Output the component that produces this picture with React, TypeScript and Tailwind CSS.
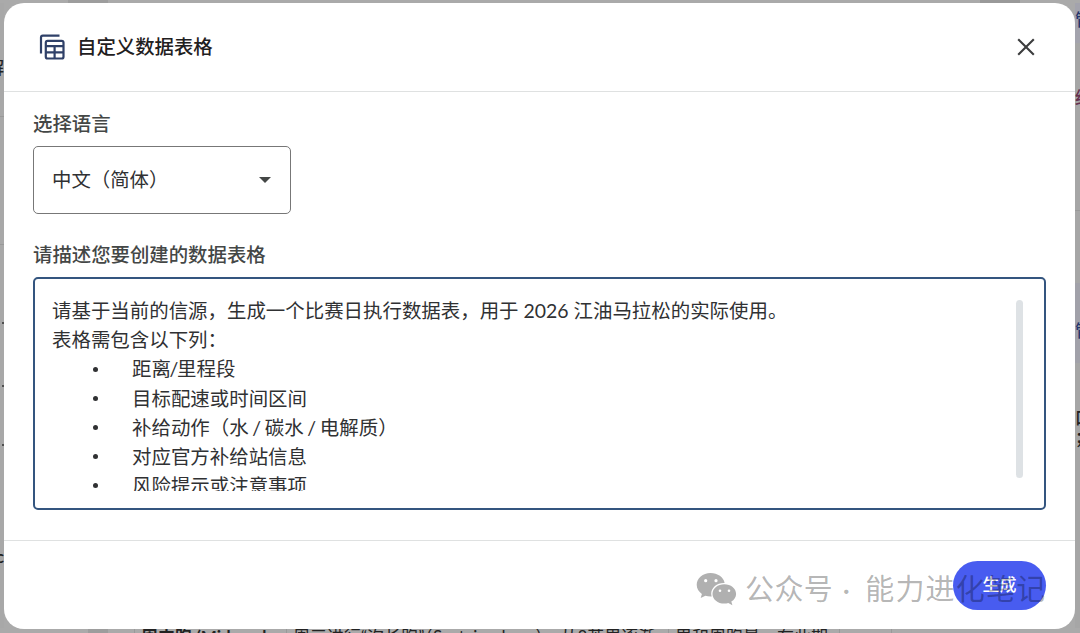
import type { ReactNode } from 'react'

const INTRO = ['请基于当前的信源，生成一个比赛日执行数据表，用于 2026 江油马拉松的实际使用。', '表格需包含以下列：']

const COLUMNS = [
  '距离/里程段',
  '目标配速或时间区间',
  '补给动作（水 / 碳水 / 电解质）',
  '对应官方补给站信息',
  '风险提示或注意事项',
]

function TableIcon() {
  return (
    <svg width="26" height="26" viewBox="0 0 26 26" fill="none" stroke="#2f4068" strokeWidth="2.2">
      <path d="M2 19.5V3.5a1.8 1.8 0 0 1 1.8-1.8H20.5" />
      <rect x="6.8" y="6.8" width="17.7" height="17.7" rx="1.8" />
      <path d="M6.8 12.2h17.7M6.8 18.3h17.7M15.6 12.2v12.3" />
    </svg>
  )
}

function CloseIcon() {
  return (
    <svg width="18" height="18" viewBox="0 0 18 18" fill="none" stroke="#3c3d3e" strokeWidth="2.1">
      <path d="M1.2 1.2l15.6 15.6M16.8 1.2L1.2 16.8" />
    </svg>
  )
}

function WechatIcon() {
  return (
    <svg width="42" height="34" viewBox="0 0 42 34" fill="#b0b0b0">
      <path d="M14.5 1C6.8 1 .7 6.2.7 12.8c0 3.7 2 7 5.2 9.2l-1.2 4 4.7-2.3c1.6.5 3.3.8 5.1.8h1.200c-.3-1-.5-1.9-.5-2.9 0-6 5.7-10.7 12.6-10.7h.8C27.7 5.2 21.7 1 14.5 1z" />
      <path d="M28.3 12.3c-6.5 0-11.8 4.2-11.8 9.6s5.3 9.7 11.8 9.7c1.4 0 2.8-.2 4-.6l4.1 2.2-1.1-3.6c2.9-1.8 4.8-4.5 4.8-7.7 0-5.4-5.300-9.600-11.800-9.600z" />
      <g fill="#fff">
        <circle cx="9.7" cy="8.7" r="1.6" />
        <circle cx="20" cy="8.7" r="1.6" />
        <circle cx="24" cy="18.7" r="1.3" />
        <circle cx="33" cy="18.7" r="1.3" />
      </g>
    </svg>
  )
}

function Cell({ className, children }: { className: string; children?: ReactNode }) {
  return <div className={`shrink-0 overflow-hidden border-l border-[#999] ${className}`}>{children}</div>
}

// The dimmed page that shows around the dialog
function Backdrop() {
  return (
    <div className="flex h-full flex-col bg-[#aaa] text-[17px] text-[#222]">
      <div className="flex h-[3px]">
        <div className="ml-[68px] w-10 bg-[#9d9d9d]" />
        <div className="ml-auto mr-[60px] w-10 bg-[#999]" />
      </div>
      <div className="flex h-[625px] justify-between leading-5">
        <div className="flex w-1 flex-col items-end overflow-hidden bg-[#a8a8a8]">
          <div className="mt-[55px] h-5 font-medium">解</div>
          <div className="mt-[38px] h-px w-1 bg-[#999]" />
          <div className="mt-[127px] h-px w-1 bg-[#999]" />
          <div className="mt-[77px] size-0.5 rounded-full bg-[#333]" />
          <div className="mt-[61px] size-0.5 rounded-full bg-[#333]" />
          <div className="mt-[57px] size-0.5 rounded-full bg-[#333]" />
          <div className="mt-[101px] h-5 font-bold">c</div>
        </div>
        <div className="flex w-[5px] flex-col overflow-hidden bg-[#a6a6a6] font-medium">
          <div className="h-10 bg-[#a3a3ad] pt-[7px] text-[#26366d]">管</div>
          <div className="mt-[45px] h-5 text-[#65304e]">经</div>
          <div className="mt-[102px] h-px bg-[#999]" />
          <div className="mt-[72px] h-20 bg-[#a1a1a9] pt-[38px] text-[#26366d]">管</div>
          <div className="mt-[45px] h-5">口</div>
          <div className="h-5">；</div>
        </div>
      </div>
      <div className="flex h-[5px] whitespace-nowrap leading-[17px]">
        <div className="w-[88px] shrink-0" />
        <div className="w-5 shrink-0 bg-[#9d9d9d]" />
        <div className="w-[26px] shrink-0" />
        <Cell className="w-[152px] pl-1.5 font-bold">周中跑 (Midweek</Cell>
        <Cell className="w-[382px] pl-1.5">周三进行“次长跑”（Sustained run），从8英里逐渐</Cell>
        <Cell className="w-[171px] pl-1.5">里和周跑量。在此期</Cell>
        <Cell className="w-[52px]" />
        <Cell className="w-[98px]" />
      </div>
    </div>
  )
}

function LanguageSelect() {
  return (
    <button className="flex h-[68px] w-[258px] items-center justify-between rounded-[5px] border border-[#777] pb-0.5 pl-[18px] pr-[19px] text-[#303133]">
      <span>中文（简体）</span>
      <svg className="mt-0.5" width="12" height="6" viewBox="0 0 12 6" fill="#444746">
        <path d="M0 0h12L6 6z" />
      </svg>
    </button>
  )
}

function PromptBox() {
  return (
    <div className="mt-2 flex h-[233px] w-[1013px] justify-between rounded-[5px] border-2 border-[#34557f] pl-[17px] pr-[21px] pt-[17px] text-[19.45px] text-[#303133]">
      <div className="h-[195px] overflow-hidden leading-[29.2px]">
        {INTRO.map((line) => (
          <p key={line}>{line}</p>
        ))}
        <ul>
          {COLUMNS.map((col) => (
            <li key={col} className="flex items-center pl-[41px]">
              <span className="mr-[34px] size-[5px] rounded-full bg-[#303133]" />
              <span>
                {col.split('/').map((part, i) => (
                  <span key={i}>
                    {i > 0 && <span className="-mx-[1.3px]">/</span>}
                    {part}
                  </span>
                ))}
              </span>
            </li>
          ))}
        </ul>
      </div>
      <div className="mt-1 h-[178px] w-[7px] rounded-full bg-[#dee2e5]" />
    </div>
  )
}

export default function App() {
  return (
    <div className="relative h-[633px] w-[1080px] overflow-hidden font-['Lato','Noto_Sans_CJK_SC',sans-serif]">
      <Backdrop />
      <div className="absolute left-1 top-[3px] flex h-[626px] w-[1071px] flex-col rounded-[20px] bg-white text-[19.4px]">
        <header className="flex h-[89px] shrink-0 items-center border-b border-[#dfe1e1] pl-[35px] pr-10">
          <TableIcon />
          <h1 className="ml-3 font-medium text-[#1f2021]">自定义数据表格</h1>
          <button className="ml-auto" aria-label="关闭">
            <CloseIcon />
          </button>
        </header>
        <main className="flex flex-1 flex-col pl-[29px] pt-[17px] leading-[29px]">
          <h2 className="mb-2 font-medium text-[#444746]">选择语言</h2>
          <LanguageSelect />
          <h2 className="mt-[26px] font-medium text-[#444746]">请描述您要创建的数据表格</h2>
          <PromptBox />
        </main>
        <footer className="flex h-[89px] shrink-0 items-center justify-end border-t border-[#dfe1e1] pr-[29px]">
          <button className="h-[49px] w-[93px] rounded-full bg-[#485cf0] text-[17px] font-medium text-white">生成</button>
        </footer>
      </div>
      <div className="absolute left-[696px] top-[572px] flex h-[34px] items-center whitespace-nowrap text-[29px] leading-[34px] text-black/30">
        <WechatIcon />
        <span className="ml-[7px] tracking-[0.4px]">公众号</span>
        <span className="ml-[7px] w-3 text-center">·</span>
        <span className="ml-[13px] tracking-[1.2px]">能力进化笔记</span>
      </div>
    </div>
  )
}
